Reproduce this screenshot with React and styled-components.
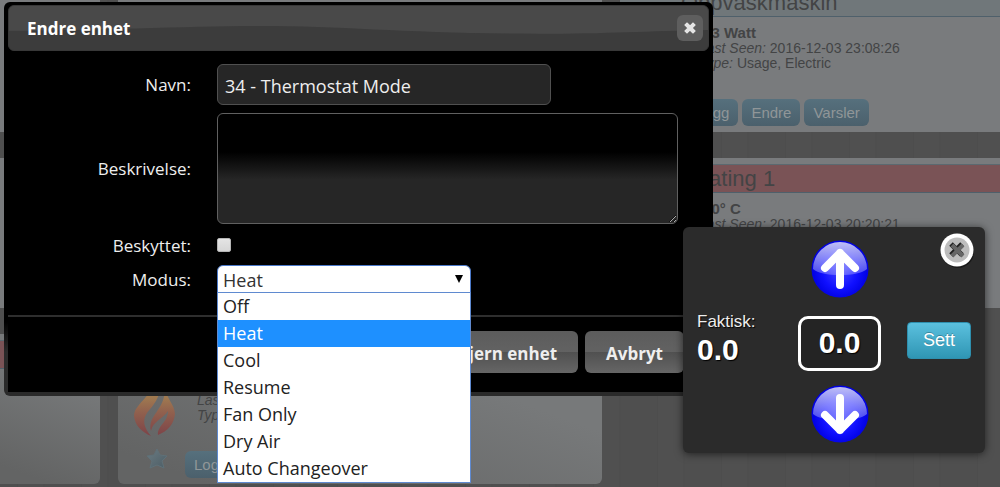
import React from "react";
import styled, { createGlobalStyle } from "styled-components";

const GlobalStyle = createGlobalStyle`
  * {
    box-sizing: border-box;
  }

  body {
    margin: 0;
    font-family: "Liberation Sans", Arial, sans-serif;
    background: #4e4e4e;
  }
`;

const Page = styled.div`
  position: relative;
  height: 100vh;
  overflow: hidden;
  background: repeating-linear-gradient(
    90deg,
    #4f4f4f 0 17px,
    #4d4d4d 17px 18px,
    #505050 18px 43px,
    #4e4e4e 43px 45px,
    #4f4f4f 45px 64px
  );
`;

/* Dashboard behind the dialog */

const Dashboard = styled.main`
  display: grid;
  grid-template-columns: 100px 484px minmax(484px, 1fr);
  grid-auto-rows: 150px;
  gap: 26px 18px;
  margin-top: -18px;
`;

const Card = styled.section`
  display: flex;
  flex-direction: column;
  padding: 6px 0;
  overflow: hidden;
  border-radius: ${(props) => (props.$edge ? "0 6px 6px 0" : "6px")};
  background: ${(props) =>
    props.$shade
      ? "linear-gradient(200deg, #77797a 30%, #636464 90%)"
      : "#797b7d"};
  color: #434445;
`;

const CardTitle = styled.h2`
  flex: none;
  height: 29px;
  margin: 0;
  padding-left: 61px;
  border-top: 1px solid #5b6970;
  border-bottom: 1px solid #4f606b;
  background: ${(props) => (props.$alert ? "#7a5356" : "#70777a")};
  font-size: 22px;
  font-weight: normal;
  line-height: 27px;
`;

const CardBody = styled.div`
  display: flex;
  flex: 1;
  padding: 7px 0 0 16px;
`;

const CardIcon = styled.div`
  width: 63px;
`;

const Info = styled.div`
  font-size: 14px;
  line-height: 15px;

  strong {
    display: block;
    font-size: 15px;
    line-height: 17px;
  }
`;

const CardFooter = styled.div`
  display: flex;
  align-items: flex-start;
  gap: 4px;
  padding-left: 28px;
`;

const StarButton = styled.button`
  display: flex;
  width: 35px;
  margin-top: -3px;
  padding: 0;
  border: 0;
  background: none;
`;

const CardButton = styled.button`
  height: 27px;
  padding: 0 9px;
  border: 0;
  border-radius: 6px;
  background: linear-gradient(#56707d, #4b606c);
  color: #909698;
  font-family: inherit;
  font-size: 15px;
`;

/* Dialog */

const Dialog = styled.div`
  position: absolute;
  top: 2px;
  left: 4px;
  width: 709px;
  padding: 3px 4px 4px;
  border-radius: 6px;
  background: linear-gradient(#000 320px, #2a2a2a 350px);
  font-family: "Open Sans", "Segoe UI", sans-serif;
  font-size: 18px;
  color: #eee;
`;

const TitleBar = styled.header`
  position: relative;
  display: flex;
  align-items: center;
  justify-content: space-between;
  height: 46px;
  padding: 0 5px 0 18px;
  border: 1px solid #383838;
  border-radius: 6px;
  background: #3c3c3c;
  overflow: hidden;
`;

const Wave = styled.svg`
  position: absolute;
  inset: 0;
  width: 100%;
  height: 100%;
`;

const DialogTitle = styled.h1`
  position: relative;
  margin: 0;
  font-size: 17px;
  font-weight: bold;
  color: #fff;
`;

const DialogClose = styled.button`
  position: relative;
  display: flex;
  align-items: center;
  justify-content: center;
  width: 26px;
  height: 26px;
  padding: 0;
  border: 0;
  border-radius: 6px;
  background: #5e5e5e;
`;

const DialogContent = styled.div`
  background: #000;
`;

const Form = styled.form`
  display: grid;
  grid-template-columns: 183px 1fr;
  grid-template-rows: 41px 127px 26px 42px;
  column-gap: 26px;
  align-items: center;
  padding: 13px 31px 15px 0;
`;

const Label = styled.label`
  font-size: 17px;
  font-weight: 500;
  text-align: right;
`;

const TextInput = styled.input`
  width: 334px;
  height: 41px;
  padding: 2px 7px 0;
  border: 1px solid #505050;
  border-radius: 6px;
  background: #262626;
  color: #eee;
  font: inherit;
`;

const TextArea = styled.textarea`
  width: 100%;
  height: 111px;
  padding: 6px 7px;
  border: 1px solid #606060;
  border-radius: 6px;
  background: linear-gradient(#000 35%, #262626 60%);
  color: #eee;
  font: inherit;
  resize: vertical;
`;

const CheckBox = styled.input`
  width: 14px;
  height: 14px;
  margin: 0;
  appearance: none;
  border: 1px solid #b5b5b5;
  border-radius: 2px;
  background: linear-gradient(#e4e4e4, #d6d6d6);
`;

const SelectBox = styled.div`
  position: relative;
  width: 254px;
`;

const Select = styled.select`
  display: block;
  width: 100%;
  height: 28px;
  padding: 2px 5px 0;
  appearance: none;
  border: 1px solid #4a78c8;
  border-radius: 6px 6px 0 0;
  outline: 0;
  background: #fff;
  color: #333;
  font: inherit;
  line-height: 24px;
`;

const SelectArrow = styled.svg`
  position: absolute;
  top: 10px;
  right: 8px;
  pointer-events: none;
`;

const OptionList = styled.ul`
  position: absolute;
  z-index: 1;
  top: 27px;
  left: 0;
  width: 100%;
  margin: 0;
  padding: 0;
  border: 1px solid #5f8ad0;
  background: #fff;
  color: #222;
  list-style: none;
`;

const Option = styled.li`
  height: 27px;
  padding: 0 5px;
  line-height: 26px;
  background: ${(props) => (props.$selected ? "#1e90ff" : "transparent")};
  color: ${(props) => (props.$selected ? "#fff" : "inherit")};
`;

const ButtonPane = styled.footer`
  display: flex;
  justify-content: flex-end;
  gap: 7px;
  padding: 14px 25px 19px;
  border-top: 2px solid #2e2e2e;
`;

const DialogButton = styled.button`
  height: 42px;
  padding: 2px 21px 0;
  border: 0;
  border-radius: 6px;
  background: linear-gradient(#5c5c5c, #626262 50%, #505050 50%, #666);
  color: #eee;
  font-family: inherit;
  font-size: 17px;
  font-weight: bold;
`;

/* Setpoint popup */

const Popup = styled.div`
  position: absolute;
  top: 227px;
  right: 15px;
  display: grid;
  grid-template-columns: 101px 83px 1fr;
  align-items: center;
  width: 302px;
  padding: 13px 14px 10px;
  border-radius: 6px;
  background: #2b2b2b;
  box-shadow: 0 1px 8px rgba(0, 0, 0, 0.6);
  color: #fff;
`;

const PopupClose = styled.button`
  position: absolute;
  top: 5px;
  right: 10px;
  display: flex;
  padding: 0;
  border: 0;
  background: none;
`;

const Actual = styled.div`
  padding-bottom: 6px;
  font-size: 17px;
  line-height: 22px;
  color: #eee;
  text-shadow: 1px 1px 1px #000;

  strong {
    display: block;
    font-size: 30px;
    line-height: 34px;
    color: #fff;
  }
`;

const Stepper = styled.div`
  display: flex;
  flex-direction: column;
  align-items: center;
  gap: 14px;
`;

const StepButton = styled.button`
  display: flex;
  padding: 0;
  border: 0;
  background: none;
`;

const Setpoint = styled.output`
  width: 83px;
  height: 55px;
  margin-top: 4px;
  border: 3px solid #fff;
  border-radius: 10px;
  background: #242424;
  font-size: 30px;
  font-weight: bold;
  line-height: 48px;
  text-align: center;
  text-shadow: 1px 1px 1px #000;
`;

const SetButton = styled.button`
  justify-self: end;
  width: 64px;
  height: 37px;
  margin-bottom: 2px;
  padding: 0;
  border: 1px solid #2e8fae;
  border-radius: 4px;
  background: linear-gradient(#5bc0de, #2f96b4);
  color: #fff;
  font-family: inherit;
  font-size: 18px;
  text-shadow: 0 -1px 0 rgba(0, 0, 0, 0.25);
`;

const FlameIcon = () => (
  <svg width="44" height="60" viewBox="0 0 44 60">
    <defs>
      <linearGradient id="flame" x1="0" y1="0" x2="0" y2="60" gradientUnits="userSpaceOnUse">
        <stop offset="0.35" stopColor="#a07a50" />
        <stop offset="0.6" stopColor="#91614e" />
        <stop offset="1" stopColor="#7d4348" />
      </linearGradient>
    </defs>
    <g fill="url(#flame)">
      <path d="M28 0C24 12 15 17 11 22C6 28 0 33 0 40C1 50 8 56 17 60C10 52 8 44 13 37C18 30 27 24 28 0z" />
      <path d="M31 12c0 8 10 17 10 26c-1 10-7 17-17 21c-1-9 10-13 10-24c-5 8-15 10-17 20c-4-16 14-20 14-43z" />
    </g>
  </svg>
);

const StarIcon = () => (
  <svg width="22" height="21" viewBox="0 0 22 21">
    <defs>
      <linearGradient id="star" x1="0" y1="0" x2="1" y2="1">
        <stop offset="0" stopColor="#6b7b82" />
        <stop offset="1" stopColor="#4c5d65" />
      </linearGradient>
    </defs>
    <path
      d="M11 1l3 6 7 1-5 5 2 7-7-3-7 3 2-7-5-5 7-1z"
      fill="url(#star)"
      stroke="#5f7078"
      strokeLinejoin="round"
    />
  </svg>
);

const ArrowIcon = ({ down }) => {
  const id = down ? "down" : "up";
  return (
    <svg width="58" height="58" viewBox="0 0 58 58">
      <defs>
        <radialGradient id={`${id}-ball`} cx="0.5" cy="0.55" r="0.5">
          <stop offset="0" stopColor="#4040ff" />
          <stop offset="0.6" stopColor="#1010ff" />
          <stop offset="1" stopColor="#0000e0" />
        </radialGradient>
        <linearGradient id={`${id}-gloss`} x1="0" y1="0" x2="0" y2="1">
          <stop offset="0" stopColor="#fff" stopOpacity="0.75" />
          <stop offset="1" stopColor="#fff" stopOpacity="0.25" />
        </linearGradient>
      </defs>
      <circle cx="29" cy="29" r="28.500" fill={`url(#${id}-ball)`} />
      <path
        d="M2 29a27 27 0 0 1 54 0c-5 4-14 6-27 6S7 33 2 29z"
        fill={`url(#${id}-gloss)`}
      />
      <path
        d={down ? "M29 13v32M14 30l15 15 15-15" : "M29 45V13M14 28l15-15 15 15"}
        fill="none"
        stroke="#fff"
        strokeWidth="8"
        strokeLinecap="round"
        strokeLinejoin="round"
      />
    </svg>
  );
};

const RoundCloseIcon = () => (
  <svg width="36" height="36" viewBox="0 0 36 36">
    <circle cx="19" cy="20" r="16" fill="#111" opacity="0.7" />
    <circle cx="18" cy="18" r="16.500" fill="#fff" />
    <circle cx="18" cy="18" r="12.500" fill="#bdbdbd" />
    <path d="M12 12l11 11M23 12l-11 11" stroke="#222" strokeWidth="5" />
    <path d="M13 13l11 11M24 13l-11 11" stroke="#666" strokeWidth="4" />
  </svg>
);

const CardActions = ({ actions }) => (
  <CardFooter>
    <StarButton aria-label="Favoritt">
      <StarIcon />
    </StarButton>
    {actions.map((action) => (
      <CardButton key={action}>{action}</CardButton>
    ))}
  </CardFooter>
);

const Device = ({ title, alert, status, seen, type }) => (
  <Card>
    <CardTitle $alert={alert}>{title}</CardTitle>
    <CardBody>
      <CardIcon />
      <Info>
        <strong>{status}</strong>
        <em>Last Seen:</em> {seen}
        <br />
        <em>Type:</em> {type}
      </Info>
    </CardBody>
    <CardActions actions={["Logg", "Endre", "Varsler"]} />
  </Card>
);

const modes = [
  "Off",
  "Heat",
  "Cool",
  "Resume",
  "Fan Only",
  "Dry Air",
  "Auto Changeover",
];

const EditDialog = () => (
  <Dialog role="dialog" aria-labelledby="dialog-title">
    <TitleBar>
      <Wave viewBox="0 0 700 46" preserveAspectRatio="none">
        <path
          d="M0 26C80 26 180 21 250 21C340 21 400 29 530 29C600 29 640 26 700 25V0H0z"
          fill="#494949"
        />
      </Wave>
      <DialogTitle id="dialog-title">Endre enhet</DialogTitle>
      <DialogClose aria-label="Lukk">
        <svg width="14" height="14" viewBox="0 0 14 14">
          <path
            d="M4 4l6 6M10 4l-6 6"
            stroke="#e4e4e4"
            strokeWidth="4"
            strokeLinecap="square"
          />
        </svg>
      </DialogClose>
    </TitleBar>
    <DialogContent>
      <Form>
        <Label htmlFor="name">Navn:</Label>
        <TextInput id="name" defaultValue="34 - Thermostat Mode" />
        <Label htmlFor="description">Beskrivelse:</Label>
        <TextArea id="description" />
        <Label htmlFor="protected">Beskyttet:</Label>
        <CheckBox id="protected" type="checkbox" />
        <Label htmlFor="mode">Modus:</Label>
        <SelectBox>
          <Select id="mode" defaultValue="Heat">
            {modes.map((mode) => (
              <option key={mode}>{mode}</option>
            ))}
          </Select>
          <SelectArrow width="8" height="8" viewBox="0 0 8 8">
            <path d="M0 0h8L4 8z" fill="#000" />
          </SelectArrow>
          <OptionList role="listbox">
            {modes.map((mode) => (
              <Option
                key={mode}
                role="option"
                aria-selected={mode === "Heat"}
                $selected={mode === "Heat"}
              >
                {mode}
              </Option>
            ))}
          </OptionList>
        </SelectBox>
      </Form>
      <ButtonPane>
        <DialogButton>Fjern enhet</DialogButton>
        <DialogButton>Avbryt</DialogButton>
      </ButtonPane>
    </DialogContent>
  </Dialog>
);

const SetpointPopup = () => (
  <Popup>
    <PopupClose aria-label="Lukk">
      <RoundCloseIcon />
    </PopupClose>
    <Actual>
      Faktisk:
      <strong>0.0</strong>
    </Actual>
    <Stepper>
      <StepButton aria-label="Opp">
        <ArrowIcon />
      </StepButton>
      <Setpoint>0.0</Setpoint>
      <StepButton aria-label="Ned">
        <ArrowIcon down />
      </StepButton>
    </Stepper>
    <SetButton>Sett</SetButton>
  </Popup>
);

const App = () => (
  <>
    <GlobalStyle />
    <Page>
      <Dashboard>
        <Card $edge />
        <Card />
        <Device
          title="Oppvaskmaskin"
          status="2.3 Watt"
          seen="2016-12-03 23:08:26"
          type="Usage, Electric"
        />
        <Card $edge />
        <Card />
        <Device
          title="Heating 1"
          alert
          status="5.0° C"
          seen="2016-12-03 20:20:21"
          type="Heating"
        />
        <Card $edge $shade>
          <CardTitle $alert />
        </Card>
        <Card $shade>
          <CardTitle $alert />
          <CardBody>
            <CardIcon>
              <FlameIcon />
            </CardIcon>
            <Info>
              <strong>&nbsp;</strong>
              <em>Last Seen:</em>
              <br />
              <em>Type:</em>
            </Info>
          </CardBody>
          <CardActions actions={["Logg"]} />
        </Card>
      </Dashboard>
      <EditDialog />
      <SetpointPopup />
    </Page>
  </>
);

export default App;
